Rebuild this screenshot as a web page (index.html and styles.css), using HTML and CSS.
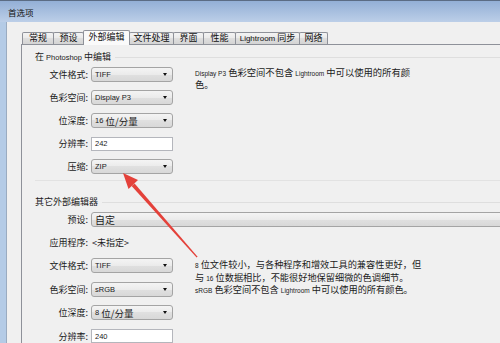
FILE: index.html
```html
<!DOCTYPE html>
<html lang="zh-CN">
<head>
<meta charset="utf-8">
<title>首选项</title>
<link rel="stylesheet" href="styles.css">
</head>
<body>
<div class="window">
  <div class="titlebar"><span class="title">首选项</span></div>
  <div class="frame">
    <div class="client">
      <div class="tabs">
        <div class="tab t1">常规</div>
        <div class="tab t2">预设</div>
        <div class="tab t3 active">外部编辑</div>
        <div class="tab t4">文件处理</div>
        <div class="tab t5">界面</div>
        <div class="tab t6">性能</div>
        <div class="tab t7"><span class="en">Lightroom</span> 同步</div>
        <div class="tab t8">网络</div>
      </div>
      <div class="panel">
        <div class="group-head"><span>在 <span class="en">Photoshop</span> 中编辑</span><i class="rule"></i></div>
        <div class="split">
          <div class="form">
            <div class="row"><label>文件格式:</label><div class="select">TIFF</div></div>
            <div class="row"><label>色彩空间:</label><div class="select">Display P3</div></div>
            <div class="row"><label>位深度:</label><div class="select">16 <span class="zh">位/分量</span></div></div>
            <div class="row"><label>分辨率:</label><div class="input">242</div></div>
            <div class="row"><label>压缩:</label><div class="select">ZIP</div></div>
          </div>
          <div class="desc d1"><span class="en">Display P3</span> 色彩空间不包含 <span class="en">Lightroom</span> 中可以使用的所有颜<br>色。</div>
        </div>
        <div class="sep"></div>
        <div class="group-head"><span>其它外部编辑器</span><i class="rule"></i></div>
        <div class="row"><label>预设:</label><div class="select wide"><span class="zh">自定</span></div></div>
        <div class="row"><label>应用程序:</label><span class="value">&lt;未指定&gt;</span></div>
        <div class="split">
          <div class="form">
            <div class="row r2"><label>文件格式:</label><div class="select">TIFF</div></div>
            <div class="row r2"><label>色彩空间:</label><div class="select">sRGB</div></div>
            <div class="row r2"><label>位深度:</label><div class="select">8 <span class="zh">位/分量</span></div></div>
            <div class="row r2"><label>分辨率:</label><div class="input">240</div></div>
          </div>
          <div class="desc d2"><span class="en">8</span> 位文件较小，与各种程序和增效工具的兼容性更好，但<br>与 <span class="en">16</span> 位数据相比，不能很好地保留细微的色调细节。<br><span class="en">sRGB</span> 色彩空间不包含 <span class="en">Lightroom</span> 中可以使用的所有颜色。</div>
        </div>
      </div>
    </div>
  </div>
</div>
<svg class="arrow" width="500" height="343" viewBox="0 0 500 343">
  <polygon points="123,173 138,180 128.5,189" fill="#e4413a"/>
  <polygon points="134.6,183.4 131.6,186 196.6,257.6 197.6,256.8" fill="#e4413a"/>
</svg>
</body>
</html>
```
FILE: styles.css
```css
html, body {
  margin: 0;
  padding: 0;
}
body {
  width: 500px;
  height: 343px;
  overflow: hidden;
  position: relative;
  background: #f0f0f0;
  font-family: "Noto Sans CJK SC", "Liberation Sans", sans-serif;
  font-size: 9px;
  color: #1a1a1a;
}
.window {
  width: 580px;
  height: 343px;
  display: flex;
  flex-direction: column;
}
.titlebar {
  height: 21px;
  flex: none;
  border-top: 1px solid #5b6c84;
  background: linear-gradient(#93afd6, #bccfe8);
  display: flex;
  align-items: center;
  padding-left: 8px;
}
.title {
  font-size: 8.5px;
  color: #111;
}
.frame {
  flex: 1;
  display: flex;
  border-left: 6px solid #b4cbe6;
}
.client {
  flex: 1;
  border-left: 1px solid #9aabc0;
  padding: 8px 0 0 14px;
  display: flex;
  flex-direction: column;
}
.en {
  font-family: "Liberation Sans", sans-serif;
  font-size: 7.5px;
}
.tabs {
  display: flex;
  align-items: flex-end;
  height: 14px;
  margin-left: 1px;
  position: relative;
  z-index: 1;
}
.tab {
  box-sizing: border-box;
  height: 12px;
  border: 1px solid #8e9199;
  border-bottom: none;
  border-radius: 2px 2px 0 0;
  margin-right: -1px;
  background: linear-gradient(#f3f3f3, #e9e9e9 50%, #dedede 50%, #d4d4d4);
  font-size: 9px;
  line-height: 10px;
  text-align: center;
  white-space: nowrap;
  color: #111;
}
.tab .en { font-size: 8px; }
.tab.active {
  height: 15px;
  margin-bottom: -1px;
  background: #fafafa;
  line-height: 12px;
}
.t1 { width: 32px; }
.t2 { width: 31px; }
.t3 { width: 47px; }
.t4 { width: 45px; }
.t5 { width: 31px; }
.t6 { width: 33px; }
.t7 { width: 65px; }
.t8 { width: 29px; }
.panel {
  flex: 1;
  border-top: 1px solid #8e9199;
  border-left: 1px solid #8e9199;
  background: #f0f0f0;
  padding-top: 6px;
}
.group-head {
  height: 12px;
  display: flex;
  align-items: center;
  gap: 4px;
  padding-left: 13px;
  line-height: 12px;
}
.rule {
  flex: 1;
  height: 1px;
  background: #dedede;
}
.split {
  display: flex;
}
.form {
  width: 151px;
  flex: none;
}
.row {
  height: 23px;
  display: flex;
  align-items: center;
}
.row.r2 {
  height: 23.5px;
}
.row label {
  width: 66px;
  margin-right: 3px;
  text-align: right;
  white-space: nowrap;
  flex: none;
}
.select {
  box-sizing: border-box;
  width: 82px;
  height: 15px;
  flex: none;
  border: 1px solid #a4a4a4;
  border-radius: 3px;
  background: linear-gradient(#f4f4f4, #ebebeb 50%, #e0e0e0 50%, #d8d8d8);
  padding-left: 3px;
  display: flex;
  align-items: center;
  position: relative;
  font-family: "Liberation Sans", sans-serif;
  font-size: 7.5px;
  white-space: pre;
}
.select .zh {
  font-family: "Noto Sans CJK SC", sans-serif;
  font-size: 9.5px;
}
.select::after {
  content: "";
  position: absolute;
  right: 5px;
  top: 5px;
  border-left: 2.5px solid transparent;
  border-right: 2.5px solid transparent;
  border-top: 3px solid #111;
}
.select.wide {
  flex: 1;
  width: auto;
}
.select.wide .zh {
  font-size: 10px;
}
.input {
  box-sizing: border-box;
  width: 82px;
  height: 14px;
  flex: none;
  border: 1px solid #b4b6bc;
  background: #fff;
  padding-left: 3px;
  display: flex;
  align-items: center;
  font-family: "Liberation Sans", sans-serif;
  font-size: 7.5px;
}
.value {
  margin-left: 1px;
  font-size: 9px;
}
.desc {
  margin-left: 22px;
  white-space: nowrap;
}
.desc .en {
  font-size: 6.5px;
}
.d1 {
  font-size: 9.3px;
  padding-top: 4px;
  line-height: 11px;
}
.d2 {
  font-size: 9.2px;
  padding-top: 5px;
  line-height: 10.5px;
}
.sep {
  height: 1px;
  margin: 2px 0 15px 13px;
  background: #e2e2e2;
}
.arrow {
  position: absolute;
  left: 0;
  top: 0;
  pointer-events: none;
}
```
